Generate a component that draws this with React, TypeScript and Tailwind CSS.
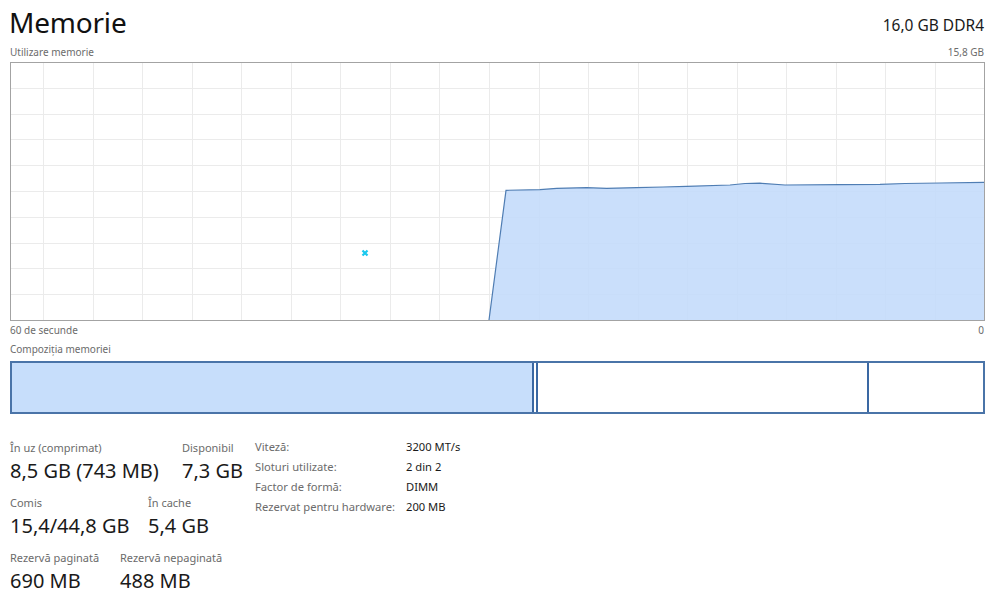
import React from "react";

const W = 973;
const H = 257;

const pts: [number, number][] = [
  [489, 320], [506, 190.3], [540, 189.7], [556.7, 188.3], [586.7, 187.7], [606.7, 188.3],
  [636.7, 187.7], [663, 187], [686.7, 186.3], [730, 185], [745, 183.5], [760, 183.2],
  [785, 185], [840, 184.6], [880, 184.3], [905, 183.5], [940, 183], [984, 182.3],
];

function Graph() {
  const ox = 11;
  const oy = 63;
  const mapped = pts.map(([x, y]) => [x - ox, y - oy] as [number, number]);
  const line = mapped.map(([x, y]) => `${x},${y}`).join(" ");
  const poly = `${line} ${W},${H} ${mapped[0][0]},${H}`;
  const verts: number[] = [];
  for (let x = 43 - ox; x < W; x += 49.55) verts.push(Math.round(x) + 0.5);
  const hors: number[] = [];
  for (let k = 1; k < 10; k++) hors.push(Math.round(62 + 25.8 * k - oy) + 0.5);
  return (
    <svg width={W} height={H} className="block">
      {verts.map((x, i) => (
        <line key={"v" + i} x1={x} y1={0} x2={x} y2={H} stroke="#ebebeb" strokeWidth={1} />
      ))}
      {hors.map((y, i) => (
        <line key={"h" + i} x1={0} y1={y} x2={W} y2={y} stroke="#ebebeb" strokeWidth={1} />
      ))}
      <polygon points={poly} fill="#c3dbfb" fillOpacity={0.88} />
      <polyline points={line} fill="none" stroke="#4f7db3" strokeWidth={1.2} />
      <g transform={`translate(${365 - ox},${253 - oy})`}>
        <path d="M-2.5,-2.5 L2.5,2.5 M2.5,-2.5 L-2.5,2.5" stroke="#19c8ee" strokeWidth={2.2} />
      </g>
    </svg>
  );
}

function Stat({ label, value, className = "" }: { label: string; value: string; className?: string }) {
  return (
    <div className={"flex flex-col " + className}>
      <div className="text-[11px] leading-[16px] text-[#6b6b6b]">{label}</div>
      <div className="text-[20px] leading-[28px] text-[#1a1a1a] mt-[1px]">{value}</div>
    </div>
  );
}

export default function App() {
  return (
    <div
      className="w-[1000px] h-[608px] bg-white overflow-hidden pl-[10px] pr-[16px] relative"
      style={{ fontFamily: '"Segoe UI", "Noto Sans", "Open Sans", sans-serif' }}
    >
      <div className="flex items-end justify-between h-[40px]">
        <div className="text-[28px] leading-[36px] tracking-[-0.2px] text-[#111] -ml-[1px]">Memorie</div>
        <div className="text-[15.5px] leading-[22px] text-[#1a1a1a] mb-[4px]">16,0 GB DDR4</div>
      </div>
      <div className="flex justify-between text-[10px] leading-[14px] text-[#6b6b6b] mt-[5px]">
        <span>Utilizare memorie</span>
        <span>15,8 GB</span>
      </div>
      <div className="mt-[3px] w-[975px] h-[259px] border border-[#a3a3a3]">
        <Graph />
      </div>
      <div className="flex justify-between text-[10px] leading-[14px] text-[#6b6b6b] mt-[2px]">
        <span>60 de secunde</span>
        <span>0</span>
      </div>
      <div className="text-[10px] leading-[14px] text-[#6b6b6b] mt-[5px]">Compoziția memoriei</div>
      <div className="mt-[5px] w-[975px] h-[53px] border-2 border-[#4a74a8] flex">
        <div className="w-[522px] bg-[#c7defb] border-r-2 border-[#3a68a3]"></div>
        <div className="w-[2px]"></div>
        <div className="w-[333px] border-l-2 border-r-2 border-[#3a68a3]"></div>
        <div className="flex-1"></div>
      </div>
      <div className="flex items-start mt-[26px]">
        <div className="flex flex-col gap-[10px] w-[245px]">
          <div className="flex">
            <Stat label="În uz (comprimat)" value="8,5 GB (743 MB)" className="w-[172px]" />
            <Stat label="Disponibil" value="7,3 GB" />
          </div>
          <div className="flex">
            <Stat label="Comis" value="15,4/44,8 GB" className="w-[138px]" />
            <Stat label="În cache" value="5,4 GB" />
          </div>
          <div className="flex">
            <Stat label="Rezervă paginată" value="690 MB" className="w-[110px]" />
            <Stat label="Rezervă nepaginată" value="488 MB" />
          </div>
        </div>
        <div className="grid grid-cols-[151px_auto] content-start items-start gap-y-[4px] text-[11.2px] leading-[16px] -mt-[1px]">
          <div className="text-[#6b6b6b]">Viteză:</div>
          <div className="text-[#1a1a1a]">3200 MT/s</div>
          <div className="text-[#6b6b6b]">Sloturi utilizate:</div>
          <div className="text-[#1a1a1a]">2 din 2</div>
          <div className="text-[#6b6b6b]">Factor de formă:</div>
          <div className="text-[#1a1a1a]">DIMM</div>
          <div className="text-[#6b6b6b]">Rezervat pentru hardware:</div>
          <div className="text-[#1a1a1a]">200 MB</div>
        </div>
      </div>
    </div>
  );
}
